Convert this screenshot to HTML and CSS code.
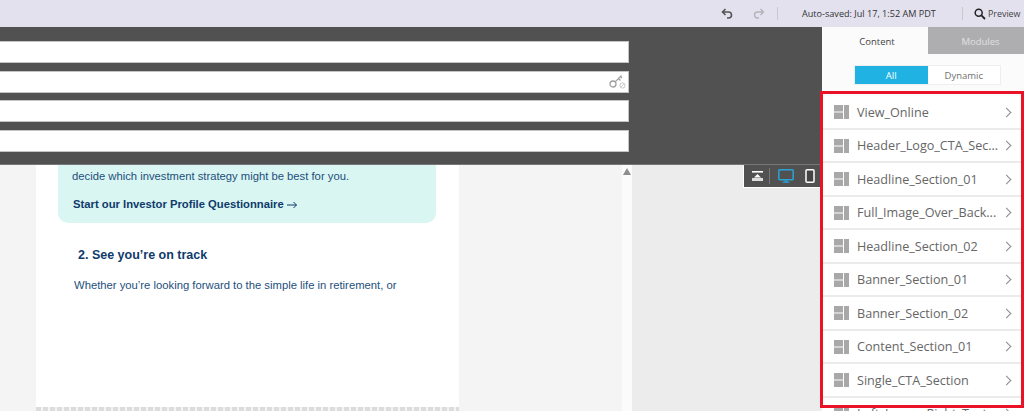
FILE: index.html
```html
<!DOCTYPE html>
<html lang="en">
<head>
    <meta charset="UTF-8">
    <meta name="viewport" content="width=device-width, initial-scale=1.0">
    <title>Email editor</title>
    <link rel="stylesheet" href="styles.css">
</head>
<body>
    <!-- Barre du haut -->
    <header class="topbar">
        <svg class="hist-icon undo" width="12" height="11" viewBox="0 0 12 11"><path d="M4.500 1 1.500 4l3 3M1.500 4H7.500a3 3 0 0 1 3 3 3 3 0 0 1-3 3H6" fill="none" stroke="#555" stroke-width="1.600"/></svg>
        <svg class="hist-icon redo" width="12" height="11" viewBox="0 0 12 11"><path d="M7.500 1l3 3-3 3M10.500 4H4.500a3 3 0 0 0-3 3 3 3 0 0 0 3 3H6" fill="none" stroke="#b4b4b8" stroke-width="1.400"/></svg>
        <span class="sep sep-a"></span>
        <span class="saved">Auto-saved: Jul 17, 1:52 AM PDT</span>
        <span class="sep sep-b"></span>
        <svg class="search" width="12" height="12" viewBox="0 0 12 12"><circle cx="4.700" cy="4.700" r="3.500" fill="none" stroke="#222" stroke-width="1.500"/><path d="M7.400 7.400 11 11" stroke="#222" stroke-width="1.800"/></svg>
        <span class="preview">Preview</span>
    </header>

    <div class="workspace">
        <main class="stage">
            <div class="canvas">
                <div class="email">
                    <div class="callout">
                        <p>decide which investment strategy might be best for you.</p>
                        <a class="callout-link">Start our Investor Profile Questionnaire <svg class="arrow" width="10" height="8" viewBox="0 0 10 8"><path d="M0 4h9.500M6.500 1l3 3-3 3" fill="none" stroke="#0f3a6b"/></svg></a>
                    </div>
                    <h2>2. See you’re on track</h2>
                    <p class="body-text">Whether you’re looking forward to the simple life in retirement, or</p>
                    <div class="dash-line"></div>
                </div>
                <div class="scroll-track"><span class="scroll-up"></span></div>
                <div class="canvas-side"></div>
            </div>

            <!-- Panneau sombre par dessus le canvas -->
            <div class="subject-panel">
                <div class="field"></div>
                <div class="field field-key">
                    <svg width="17" height="15" viewBox="0 0 17 15"><circle cx="4" cy="10" r="3" fill="none" stroke="#a0a0a0" stroke-width="1.300"/><path d="M6.200 7.800 12.500 1.500M9.500 4.500l2 2M11.500 2.500l1.500 1.500" fill="none" stroke="#a0a0a0" stroke-width="1.200"/><circle cx="13.500" cy="11.500" r="2.600" fill="none" stroke="#c4c4c4"/><path d="M12 13l3-3" stroke="#c4c4c4" stroke-width=".8"/></svg>
                </div>
                <div class="field"></div>
                <div class="field"></div>
            </div>
            <div class="view-tools">
                <svg width="11" height="10" viewBox="0 0 11 10"><path d="M0 .8h11" stroke="#fff" stroke-width="1.600"/><path d="M5.500 3 9 6.500H2z" fill="#fff"/><path d="M0 7h11v3H0z" fill="#ddd"/></svg>
                <span class="tool-sep"></span>
                <svg width="16" height="14" viewBox="0 0 16 14"><rect x=".8" y=".8" width="14.400" height="9.900" rx="1" fill="none" stroke="#2aa3d8" stroke-width="1.500"/><path d="M6.500 11.500h3v1.200h-3zM4.500 12.700h7v1h-7z" fill="#2aa3d8"/></svg>
                <svg class="phone" width="10" height="14" viewBox="0 0 10 14"><rect x="1" y=".8" width="8" height="12.400" rx="1" fill="#444" stroke="#fff" stroke-width="1.500"/></svg>
            </div>
        </main>

        <aside class="sidebar">
            <div class="tabs">
                <div class="tab active">Content</div>
                <div class="tab">Modules</div>
            </div>
            <div class="toggle">
                <div class="toggle-btn on">All</div>
                <div class="toggle-btn">Dynamic</div>
            </div>
            <ul class="sections">
                <li><svg class="grip" viewBox="0 0 15 14"><path d="M0 0h9v6.500H0zM0 7.500h9V14H0zM10 0h5v14h-5z"/></svg><span>View_Online</span><i class="chev"></i></li>
                <li><svg class="grip" viewBox="0 0 15 14"><path d="M0 0h9v6.500H0zM0 7.500h9V14H0zM10 0h5v14h-5z"/></svg><span>Header_Logo_CTA_Sec...</span><i class="chev"></i></li>
                <li><svg class="grip" viewBox="0 0 15 14"><path d="M0 0h9v6.500H0zM0 7.500h9V14H0zM10 0h5v14h-5z"/></svg><span>Headline_Section_01</span><i class="chev"></i></li>
                <li><svg class="grip" viewBox="0 0 15 14"><path d="M0 0h9v6.500H0zM0 7.500h9V14H0zM10 0h5v14h-5z"/></svg><span>Full_Image_Over_Back...</span><i class="chev"></i></li>
                <li><svg class="grip" viewBox="0 0 15 14"><path d="M0 0h9v6.500H0zM0 7.500h9V14H0zM10 0h5v14h-5z"/></svg><span>Headline_Section_02</span><i class="chev"></i></li>
                <li><svg class="grip" viewBox="0 0 15 14"><path d="M0 0h9v6.500H0zM0 7.500h9V14H0zM10 0h5v14h-5z"/></svg><span>Banner_Section_01</span><i class="chev"></i></li>
                <li><svg class="grip" viewBox="0 0 15 14"><path d="M0 0h9v6.500H0zM0 7.500h9V14H0zM10 0h5v14h-5z"/></svg><span>Banner_Section_02</span><i class="chev"></i></li>
                <li><svg class="grip" viewBox="0 0 15 14"><path d="M0 0h9v6.500H0zM0 7.500h9V14H0zM10 0h5v14h-5z"/></svg><span>Content_Section_01</span><i class="chev"></i></li>
                <li><svg class="grip" viewBox="0 0 15 14"><path d="M0 0h9v6.500H0zM0 7.500h9V14H0zM10 0h5v14h-5z"/></svg><span>Single_CTA_Section</span><i class="chev"></i></li>
                <li><svg class="grip" viewBox="0 0 15 14"><path d="M0 0h9v6.500H0zM0 7.500h9V14H0zM10 0h5v14h-5z"/></svg><span>Left_Image_Right_Text</span><i class="chev"></i></li>
            </ul>
        </aside>
        <div class="red-box"></div>
    </div>
</body>
</html>
```

FILE: styles.css
```css
* {
    margin: 0;
    padding: 0;
    box-sizing: border-box;
}

body {
    width: 1024px;
    height: 411px;
    overflow: hidden;
    font-family: "Open Sans", sans-serif;
    background-color: #fff;
}

/* Barre du haut */
.topbar {
    height: 27px;
    background-color: #e3e1ee;
    display: flex;
    align-items: center;
    padding-left: 721px;
    font-size: 9.100px;
    color: #333;
}

.hist-icon {
    flex: none;
}

.redo {
    margin-left: 20px;
}

.sep {
    width: 1px;
    height: 13px;
    background-color: #c9c8d0;
}

.sep-a {
    margin-left: 12px;
}

.saved {
    margin-left: 24px;
    width: 160px;
    white-space: nowrap;
}

.search {
    margin-left: 11px;
}

.preview {
    margin-left: 2px;
    font-size: 8.900px;
    color: #444;
}

.workspace {
    position: relative;
    display: flex;
    height: 384px;
}

/* Zone centrale */
.stage {
    position: relative;
    width: 822px;
    overflow: hidden;
}

.canvas {
    display: flex;
    height: 100%;
    padding-left: 36px;
    background-color: #f4f4f4;
}

.email {
    width: 423px;
    height: 100%;
    flex: none;
    background-color: #fff;
    padding: 120px 23px 0 22px;
    position: relative;
    color: #1d4f7c;
    font-family: "Liberation Sans", Arial, sans-serif;
}

.callout {
    height: 76px;
    background-color: #d9f6f2;
    border-radius: 0 0 10px 10px;
    padding: 22px 14px 0 14px;
    font-size: 11.250px;
    line-height: 15px;
}

.callout-link {
    display: block;
    margin-top: 13px;
    padding-left: 1px;
    font-weight: bold;
    color: #0f3a6b;
}

.arrow {
    vertical-align: -1px;
}

.email h2 {
    font-size: 12.500px;
    line-height: 16px;
    margin: 24px 0 0 20px;
    color: #0f3a6b;
}

.body-text {
    font-size: 11.270px;
    line-height: 15px;
    margin: 15px 0 0 16px;
}

.dash-line {
    position: absolute;
    left: 0;
    right: 0;
    bottom: 0;
    height: 4px;
    background: repeating-linear-gradient(to right, #dcdcdc 0, #dcdcdc 5px, #f4f4f4 5px, #f4f4f4 7px);
}

.scroll-track {
    width: 10px;
    height: 100%;
    margin-left: 163px;
    background-color: #fbfbfb;
    flex: none;
}

.scroll-up {
    display: block;
    position: absolute;
    left: 623px;
    top: 141px;
    width: 0;
    height: 0;
    border-left: 4px solid transparent;
    border-right: 4px solid transparent;
    border-bottom: 7px solid #8e8e8e;
}

.canvas-side {
    flex: 1;
    background-color: #ececec;
}

/* Panneau sombre */
.subject-panel {
    position: absolute;
    left: 0;
    top: 0;
    width: 822px;
    height: 138px;
    background-color: #515151;
    padding: 14px 193px 0 0;
    display: flex;
    flex-direction: column;
    gap: 7.500px;
    border-bottom: 1px solid #777;
}

.field {
    height: 22px;
    background-color: #fff;
    border: 1px solid #c4c4c4;
    border-left: 0;
    display: flex;
    justify-content: flex-end;
    align-items: center;
    padding-right: 2px;
}

.view-tools {
    position: absolute;
    right: 0;
    top: 138px;
    width: 78px;
    height: 22px;
    background-color: #515151;
    display: flex;
    align-items: center;
    padding-left: 8px;
    box-shadow: -1px 1px 0 #fff;
}

.tool-sep {
    width: 1px;
    height: 16px;
    background-color: #777;
    margin: 0 8px 0 6px;
}

.phone {
    margin-left: 11px;
}

/* Colonne de droite */
.sidebar {
    width: 202px;
    background-color: #fbfbfb;
    overflow: hidden;
}

.tabs {
    display: flex;
    height: 27px;
    font-size: 9.500px;
    font-weight: 500;
}

.tab {
    width: 96px;
    display: flex;
    align-items: center;
    justify-content: center;
    padding: 2px 0 0 9px;
    background-color: #aeaeb0;
    color: #e0e0e0;
}

.tab.active {
    width: 106px;
    padding-left: 4px;
    background-color: #fbfbfb;
    color: #444;
}

.toggle {
    display: flex;
    width: 147px;
    height: 20px;
    margin: 11px 0 0 32px;
    font-size: 9.500px;
    border: 1px solid #eee;
}

.toggle-btn {
    width: 50%;
    display: flex;
    align-items: center;
    justify-content: center;
    color: #707070;
    background-color: #fff;
}

.toggle-btn.on {
    background-color: #1fb2e2;
    color: #fff;
}

.sections {
    list-style: none;
    margin-top: 11px;
    background-color: #fff;
}

.sections li {
    height: 33.500px;
    display: flex;
    align-items: center;
    padding: 1px 0 0 12px;
    font-size: 12.600px;
    color: #666;
    border-bottom: 2px solid #ebebeb;
    white-space: nowrap;
}

.grip {
    width: 15px;
    height: 14px;
    fill: #a8a8a8;
    flex: none;
    margin-right: 8px;
}

.chev {
    width: 7px;
    height: 7px;
    border-top: 1px solid #8a8a8a;
    border-right: 1px solid #8a8a8a;
    transform: rotate(45deg);
    margin-left: auto;
    margin-right: 14px;
    flex: none;
}

.red-box {
    position: absolute;
    left: 820px;
    top: 64px;
    width: 204px;
    height: 317px;
    border: 3px solid #ea1226;
}
```
